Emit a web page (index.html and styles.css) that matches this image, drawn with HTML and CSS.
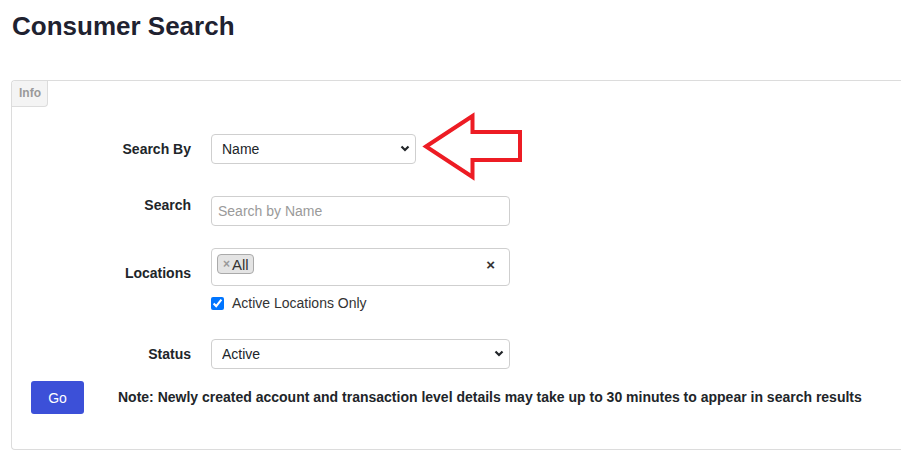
FILE: index.html
```html
<!DOCTYPE html>
<html lang="en">
<head>
<meta charset="utf-8">
<title>Consumer Search</title>
<link rel="stylesheet" href="styles.css">
</head>
<body>
<h1 class="title">Consumer Search</h1>
<div class="panel">
  <div class="tab">Info</div>
  <div class="form">
    <div class="row row-by">
      <label class="lbl lbl-center">Search By</label>
      <div class="select-wrap select-short">
        <select class="select"><option>Name</option></select>
        <svg class="chev" width="10" height="7" viewBox="0 0 10 7"><path d="M1.5 1.5l3.5 3.5 3.5-3.5" fill="none" stroke="#212529" stroke-width="2.2"/></svg>
      </div>
    </div>
    <div class="row row-search">
      <label class="lbl lbl-top">Search</label>
      <input class="input" type="text" placeholder="Search by Name">
    </div>
    <div class="row row-loc">
      <label class="lbl lbl-loc">Locations</label>
      <div class="loc-col">
        <div class="multi">
          <span class="tag"><span class="tag-x">×</span>All</span>
          <span class="clear">×</span>
        </div>
        <label class="check"><input type="checkbox" checked class="cb"><span>Active Locations Only</span></label>
      </div>
    </div>
    <div class="row row-status">
      <label class="lbl lbl-center">Status</label>
      <div class="select-wrap">
        <select class="select"><option>Active</option></select>
        <svg class="chev" width="10" height="7" viewBox="0 0 10 7"><path d="M1.5 1.5l3.5 3.5 3.5-3.5" fill="none" stroke="#212529" stroke-width="2.2"/></svg>
      </div>
    </div>
  </div>
  <div class="actions">
    <button class="go" type="button">Go</button>
    <p class="note">Note: Newly created account and transaction level details may take up to 30 minutes to appear in search results</p>
  </div>
  <svg class="arrow" width="115" height="85" viewBox="0 0 115 85"><polygon points="11,41.5 57.5,11 57.5,27 105,27 105,55 57.5,55 57.5,72" fill="none" stroke="#ed1c24" stroke-width="4" stroke-linejoin="miter"/></svg>
</div>
</body>
</html>
```

FILE: styles.css
```css
* { box-sizing: border-box; }
body {
  margin: 0;
  font-family: "Liberation Sans", Arial, sans-serif;
  color: #212529;
  background: #fff;
}
.title {
  margin: 11px 0 0 12px;
  font-size: 26px;
  line-height: 30px;
  font-weight: bold;
  color: #1f2230;
}
.panel {
  position: relative;
  margin: 39px 0 0 11px;
  width: 890px;
  border: 1px solid #dcdcdc;
  border-right: none;
  border-radius: 4px 0 0 4px;
  padding-bottom: 35px;
}
.tab {
  width: 36px;
  height: 26px;
  background: #f4f4f4;
  border-right: 1px solid #dcdcdc;
  border-bottom: 1px solid #dcdcdc;
  border-bottom-right-radius: 4px;
  border-top-left-radius: 4px;
  font-size: 12px;
  font-weight: bold;
  color: #9a9a9a;
  line-height: 25px;
  padding-left: 7px;
}
.row {
  display: grid;
  grid-template-columns: 179px 299px;
  column-gap: 20px;
}
.row-by { margin-top: 27px; }
.row-search { margin-top: 32px; }
.row-loc { margin-top: 22px; }
.row-status { margin-top: 27px; }
.lbl {
  text-align: right;
  font-size: 14px;
  font-weight: bold;
  line-height: 17px;
  color: #212529;
}
.lbl-center { align-self: center; }
.lbl-top { align-self: start; padding-top: 1px; }
.lbl-loc { align-self: start; padding-top: 17px; }
.select-wrap {
  position: relative;
  width: 299px;
}
.select-wrap.select-short { width: 205px; }
.select {
  appearance: none;
  -webkit-appearance: none;
  width: 100%;
  height: 30px;
  border: 1px solid #cfcfcf;
  border-radius: 4px;
  background: #fff;
  font-family: inherit;
  font-size: 14px;
  color: #212529;
  padding: 0 0 0 10px;
  margin: 0;
}
.chev {
  position: absolute;
  right: 6px;
  top: 11px;
  pointer-events: none;
}
.input {
  width: 299px;
  height: 30px;
  border: 1px solid #cfcfcf;
  border-radius: 4px;
  font-family: inherit;
  font-size: 14px;
  padding: 0 6px;
  margin: 0;
  color: #212529;
}
.input::placeholder { color: #9a9a9a; }
.multi {
  display: flex;
  align-items: flex-start;
  justify-content: space-between;
  width: 299px;
  height: 38px;
  border: 1px solid #cfcfcf;
  border-radius: 4px;
  padding: 5px 14px 0 5px;
}
.tag {
  display: inline-flex;
  align-items: center;
  height: 20px;
  padding: 0 4px 0 5px;
  background: #e4e4e4;
  border: 1px solid #aaa;
  border-radius: 4px;
  font-size: 15px;
  color: #333;
}
.tag-x {
  font-size: 12px;
  font-weight: bold;
  color: #999;
  margin-right: 2px;
}
.clear {
  font-size: 15px;
  font-weight: bold;
  color: #333;
  line-height: 20px;
  margin-top: 1px;
}
.check {
  display: flex;
  align-items: center;
  gap: 8px;
  margin-top: 9px;
  font-size: 14px;
  line-height: 17px;
  color: #333;
}
.cb {
  width: 13px;
  height: 13px;
  margin: 0;
  accent-color: #0075ff;
}
.actions {
  display: flex;
  align-items: center;
  margin-top: 12px;
  padding-left: 19px;
}
.go {
  width: 53px;
  height: 33px;
  background: #3c50d8;
  color: #fff;
  border: none;
  border-radius: 3px;
  font-family: inherit;
  font-size: 14px;
  margin: 0;
  padding: 0;
}
.note {
  margin: 0 0 0 34px;
  font-size: 14px;
  font-weight: bold;
  line-height: 17px;
  color: #212529;
}
.arrow {
  position: absolute;
  left: 403px;
  top: 24px;
}
```
